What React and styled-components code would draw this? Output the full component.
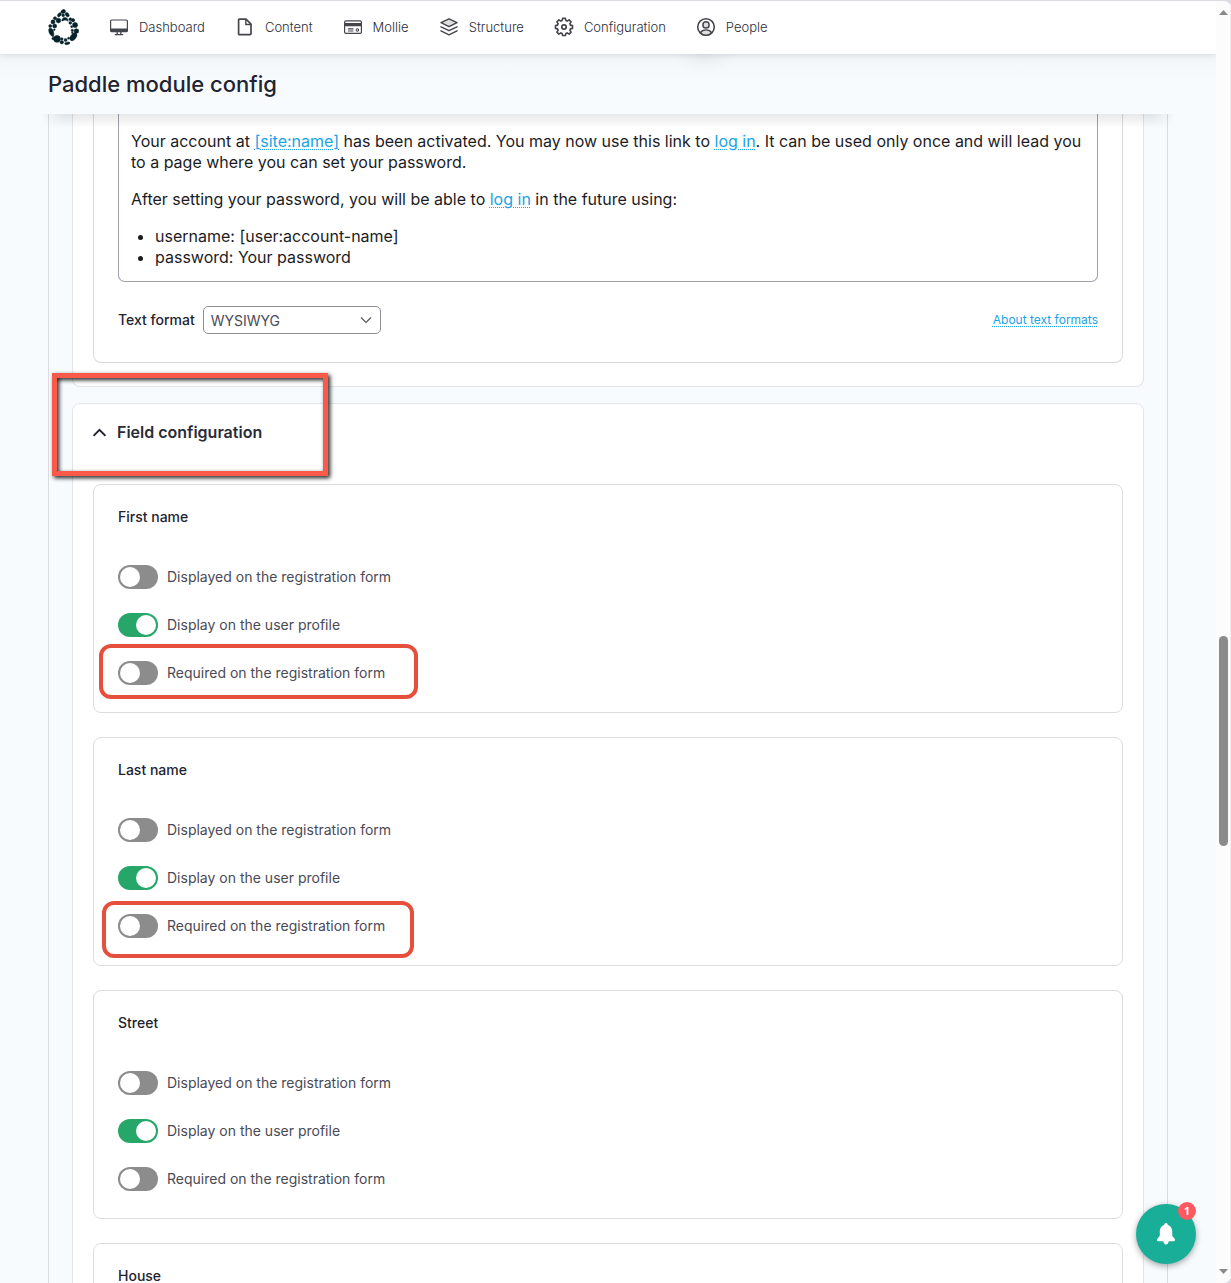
import React from 'react';
import styled, { createGlobalStyle } from 'styled-components';

const GlobalStyle = createGlobalStyle`
    *, *::before, *::after {
        box-sizing: border-box;
    }
    body {
        margin: 0;
        background-color: #dcdce2;
        font-family: Inter, sans-serif;
        color: #222330;
    }
    p, ul, h1, h2, h3 {
        margin: 0;
    }
`;

const Window = styled.div`
    height: 100vh;
    display: flex;
    overflow: hidden;
    border-top: 1px solid #dcdce2;
    border-radius: 0 8px 8px 0;
    background-color: #f7fbfe;
`;

const Main = styled.div`
    flex: 1;
    min-width: 0;
    display: flex;
    flex-direction: column;
    overflow: hidden;
`;

const Toolbar = styled.nav`
    position: relative;
    z-index: 2;
    flex: none;
    height: 53px;
    padding: 0 48px 2px;
    display: flex;
    align-items: center;
    gap: 30px;
    background-color: #fff;
    box-shadow: 0 0 8px rgba(0, 0, 0, .16);
`;

const NavLink = styled.a`
    display: flex;
    align-items: center;
    gap: 10px;
    font-size: 13px;
    line-height: 20px;
    font-weight: 300;
    color: #2c2c38;
    text-decoration: none;
`;

const NavIcon = styled.svg`
    width: 20px;
    height: 20px;
    fill: none;
    stroke: #45464c;
    stroke-width: 1.7;
    stroke-linecap: round;
    stroke-linejoin: round;
`;

const Logo = styled.svg`
    display: block;
    width: 31px;
    height: 36px;
    fill: #06232b;
    stroke: #06232b;
    stroke-width: 1.5;
`;

const TitleBar = styled.header`
    position: relative;
    z-index: 1;
    flex: none;
    height: 60px;
    padding: 0 48px;
    display: flex;
    align-items: center;
    background-color: #f7fbfe;
    background-image:
        radial-gradient(ellipse 32px 20px at 58% 0, rgba(30, 40, 60, .05), transparent),
        linear-gradient(rgba(30, 40, 60, .02), transparent 50%);

    &::after {
        content: '';
        position: absolute;
        top: 100%;
        left: 40px;
        right: 40px;
        height: 14px;
        background-image: linear-gradient(rgba(0, 0, 0, .09), transparent);
        mask-image: linear-gradient(90deg, transparent, #000 24px, #000 calc(100% - 24px), transparent);
        pointer-events: none;
    }
`;

const Title = styled.h1`
    font-size: 22px;
    line-height: 32px;
    font-weight: 500;
`;

const Content = styled.main`
    flex: 1;
    min-height: 0;
    overflow: hidden;
    padding: 0 48px;
`;

const Region = styled.div`
    padding: 0 23px 24px;
    display: flex;
    flex-direction: column;
    gap: 16px;
    border: 1px solid #d8dbdf;
    border-width: 0 1px;
`;

const Card = styled.section`
    position: relative;
    padding: 0 20px 23px;
    border: 1px solid #e2e4e8;
    border-radius: ${props => (props.$open ? '0 0 8px 8px' : '8px')};
    border-top-width: ${props => (props.$open ? '0' : '1px')};
    background-color: #fff;
`;

const TextGroup = styled.div`
    padding: 0 24px 28px;
    border: 1px solid #d9dadd;
    border-top: 0;
    border-radius: 0 0 8px 8px;
`;

const Editor = styled.div`
    padding: 17px 12px 13px;
    display: flex;
    flex-direction: column;
    gap: 16px;
    border: 1px solid #a0a0ab;
    border-top: 0;
    border-radius: 0 0 7px 7px;
    font-size: 16px;
    line-height: 21px;
    color: #1c1c1f;
`;

const TextLink = styled.a`
    color: #1ba3e6;
    text-decoration: underline dotted;
    text-decoration-thickness: 1px;
    text-underline-offset: 2px;
`;

const Tokens = styled.ul`
    padding-left: 24px;
`;

const FormatRow = styled.div`
    padding-top: 24px;
    display: flex;
    align-items: center;
    gap: 8px;
`;

const FormatLabel = styled.label`
    font-size: 14px;
    line-height: 20px;
    font-weight: 500;
`;

const SelectBox = styled.div`
    position: relative;
    width: 178px;
`;

const Select = styled.select`
    appearance: none;
    display: block;
    width: 100%;
    height: 28px;
    padding: 0 7px;
    border: 1px solid #8e8f9b;
    border-radius: 5px;
    background-color: #fff;
    font: 400 14px Inter, sans-serif;
    color: #4a4b57;
`;

const SelectArrow = styled.svg`
    position: absolute;
    top: 10px;
    right: 9px;
    width: 12px;
    height: 8px;
    fill: none;
    stroke: #55565b;
    stroke-width: 1.2;
    pointer-events: none;
`;

const HelpLink = styled(TextLink)`
    margin-left: auto;
    font-size: 12px;
    line-height: 20px;
`;

const Summary = styled.button`
    width: 100%;
    height: 56px;
    padding: 0;
    display: flex;
    align-items: center;
    gap: 11px;
    border: 0;
    background: none;
    font: 600 16px Inter, sans-serif;
    color: #2a2b38;
`;

const Chevron = styled.svg`
    width: 13px;
    height: 9px;
    fill: none;
    stroke: #222330;
    stroke-width: 1.8;
`;

const FieldList = styled.div`
    padding-top: 24px;
    display: flex;
    flex-direction: column;
    gap: 24px;
`;

const Fieldset = styled.section`
    padding: 20px 24px 27px;
    display: flex;
    flex-direction: column;
    gap: 24px;
    border: 1px solid #dcdde0;
    border-radius: 8px;
`;

const FieldTitle = styled.h3`
    margin-bottom: 12px;
    font-size: 14px;
    line-height: 24px;
    font-weight: 500;
`;

const ToggleRow = styled.div`
    position: relative;
    display: flex;
    align-items: center;
    gap: 9px;
`;

const Toggle = styled.input`
    appearance: none;
    width: 40px;
    height: 24px;
    margin: 0;
    padding: 2px;
    display: flex;
    border-radius: 12px;
    background-color: #8c8c8c;

    &::before {
        content: '';
        width: 20px;
        height: 20px;
        border-radius: 50%;
        background-color: #fff;
    }
    &:checked {
        justify-content: flex-end;
        background-color: #26a769;
    }
`;

const ToggleLabel = styled.label`
    font-size: 14px;
    line-height: 24px;
    color: #4a4a55;
`;

const HeadingMark = styled.span`
    position: absolute;
    top: -31px;
    left: -21px;
    width: 276px;
    height: 103px;
    border: 5px solid #fb5a4b;
    filter: drop-shadow(2px 2px 2px rgba(0, 0, 0, .9));
    pointer-events: none;
`;

const RowMark = styled.span`
    position: absolute;
    top: ${props => (props.$wide ? '-17px' : '-13px')};
    left: ${props => (props.$wide ? '-19px' : '-16px')};
    width: ${props => (props.$wide ? '319px' : '312px')};
    height: ${props => (props.$wide ? '55px' : '57px')};
    border: 4px solid #e64f3c;
    border-radius: 12px;
    pointer-events: none;
`;

const Scrollbar = styled.div`
    flex: none;
    width: 15px;
    padding: 8px 3px;
    display: flex;
    flex-direction: column;
    border-right: 1px solid #f0f0f2;
    background-color: #fcfcfc;
`;

const ScrollArrow = styled.svg`
    width: 9px;
    height: 6px;
    fill: #8b8b8b;
`;

const ScrollSpace = styled.div`
    flex: ${props => props.$size};
`;

const Thumb = styled.div`
    flex: 210;
    width: 9px;
    border-radius: 5px;
    background-color: #8b8b8b;
`;

const BellButton = styled.button`
    position: fixed;
    right: 35px;
    bottom: 19px;
    width: 60px;
    height: 60px;
    padding: 0;
    display: grid;
    place-items: center;
    border: 0;
    border-radius: 50%;
    background-color: #18ae97;
    box-shadow: 0 2px 6px rgba(0, 0, 0, .35);
`;

const BellIcon = styled.svg`
    width: 20px;
    height: 22px;
    fill: #fff;
`;

const Badge = styled.span`
    position: absolute;
    top: -2px;
    right: 0;
    width: 18px;
    height: 18px;
    border-radius: 50%;
    background-color: #ff5860;
    font: 700 11px/18px 'Open Sans', sans-serif;
    color: #fff;
`;

const icons = {
    Dashboard: (
        <>
            <rect x="1.6" y="3" width="16.8" height="11.6" rx="1" strokeWidth="1.2" />
            <path d="M2 12.4h16M2 13.6h16" strokeWidth="2" />
            <path d="M8.2 15v2M11.8 15v2M6.3 17.6h7.4" strokeWidth="1.3" />
        </>
    ),
    Content: (
        <>
            <path d="M4.5 2.2h6.5l5 5v9.6a.9.9 0 0 1-.9.9H4.500a.9.9 0 0 1-.9-.9V3.100a.9.9 0 0 1 .9-.9z" />
            <path d="M10.800 2.500v5h5" strokeWidth="1.4" />
        </>
    ),
    Mollie: (
        <>
            <rect x="1.6" y="3.9" width="16.8" height="12.4" rx="1.4" strokeWidth="1.2" />
            <path d="M2 7.7h16" strokeWidth="3.2" strokeLinecap="butt" />
            <path d="M5.4 11.9h4.6M5.4 14h4.6" strokeWidth="1.1" />
            <circle cx="14.4" cy="13" r="1.2" strokeWidth="1.1" />
        </>
    ),
    Structure: (
        <>
            <path d="M10 1.8l8 3.9-8 3.9-8-3.9z" fill="#dedede" strokeWidth="1.5" />
            <path d="M2 9.8l8 3.9 8-3.9M2 13.9l8 3.9 8-3.9" strokeWidth="1.5" />
        </>
    ),
    Configuration: (
        <>
            <path d="M8.6 1.9h2.8l.5 2.1 1.3.6 1.9-1.2 2 2-1.2 1.9.5 1.3 2.1.5v2.8l-2.1.5-.5 1.3 1.2 1.9-2 2-1.9-1.2-1.3.6-.5 2H8.6l-.5-2-1.3-.6-1.9 1.2-2-2 1.2-1.9-.6-1.3-2-.5V9.1l2-.5.6-1.3-1.2-1.9 2-2 1.9 1.2L8.1 4z" transform="translate(0 -.5)" strokeWidth="1.6" />
            <circle cx="10" cy="10" r="2.2" strokeWidth="1.7" />
        </>
    ),
    People: (
        <>
            <circle cx="10" cy="10" r="8.3" strokeWidth="1.6" />
            <circle cx="10" cy="7.9" r="3.1" fill="#dedede" strokeWidth="1.5" />
            <path d="M4.4 15.8c1-1.9 3-2.9 5.6-2.9s4.6 1 5.6 2.9c-1.4 1.5-3.4 2.4-5.6 2.4s-4.2-.9-5.6-2.4z" fill="#dedede" strokeWidth="1.4" />
        </>
    ),
};

const fields = [
    { name: 'First name', mark: 'wide' },
    { name: 'Last name', mark: 'narrow' },
    { name: 'Street' },
    { name: 'House' },
];

const Field = ({ name, mark }) => {
    const id = name.toLowerCase().replace(' ', '-');
    return (
        <Fieldset>
            <FieldTitle>{name}</FieldTitle>
            <ToggleRow>
                <Toggle type="checkbox" id={`${id}-display`} />
                <ToggleLabel htmlFor={`${id}-display`}>Displayed on the registration form</ToggleLabel>
            </ToggleRow>
            <ToggleRow>
                <Toggle type="checkbox" id={`${id}-profile`} defaultChecked />
                <ToggleLabel htmlFor={`${id}-profile`}>Display on the user profile</ToggleLabel>
            </ToggleRow>
            <ToggleRow>
                <Toggle type="checkbox" id={`${id}-required`} />
                <ToggleLabel htmlFor={`${id}-required`}>Required on the registration form</ToggleLabel>
                {mark && <RowMark $wide={mark === 'wide'} />}
            </ToggleRow>
        </Fieldset>
    );
};

const App = () => (
    <>
        <GlobalStyle />
        <Window>
            <Main>
                <Toolbar>
                    <Logo viewBox="0 0 90 106" aria-hidden="true">
                        <path d="M37 9c2-5 6-8 9-8 4 2 6 5 5 8s-6 5-9 4-5-2-5-4z" />
                        <ellipse cx="33" cy="17" rx="7" ry="4.5" transform="rotate(-48 33 17)" />
                        <ellipse cx="56" cy="17" rx="7" ry="5" transform="rotate(50 56 17)" />
                        <circle cx="44" cy="19" r="4" />
                        <circle cx="30" cy="34" r="7" />
                        <path d="M40 35c0-6 4-10 9-10s10 4 10 11c-4-2-8-4-12-3-3 0-7 4-7 2z" />
                        <circle cx="20" cy="27" r="4.5" />
                        <circle cx="65" cy="30" r="4" />
                        <circle cx="73" cy="33" r="5" />
                        <circle cx="65" cy="41" r="4" />
                        <circle cx="14" cy="38" r="6" />
                        <circle cx="19" cy="50" r="6" />
                        <circle cx="6" cy="50" r="4.5" />
                        <circle cx="79" cy="47" r="7.5" />
                        <circle cx="69" cy="52" r="3" />
                        <path d="M2 58c5-3 12 0 13 7 1 6 3 10 0 17C5 78 0 68 2 58z" />
                        <circle cx="18" cy="61" r="2.5" />
                        <circle cx="83" cy="65" r="7" />
                        <circle cx="71" cy="63" r="3.5" />
                        <ellipse cx="74" cy="82" rx="13" ry="8" transform="rotate(-52 74 82)" />
                        <circle cx="71" cy="70" r="2.5" />
                        <circle cx="26" cy="88" r="10" />
                        <circle cx="15" cy="87" r="4" />
                        <circle cx="40" cy="88" r="3.5" />
                        <circle cx="40" cy="98" r="5" />
                        <circle cx="60" cy="86" r="3" />
                        <circle cx="51" cy="91" r="4.5" />
                        <ellipse cx="56" cy="101" rx="8" ry="3.5" transform="rotate(-12 56 101)" />
                    </Logo>
                    {Object.keys(icons).map(name => (
                        <NavLink href="#" key={name}>
                            <NavIcon viewBox="0 0 20 20">{icons[name]}</NavIcon>
                            {name}
                        </NavLink>
                    ))}
                </Toolbar>
                <TitleBar>
                    <Title>Paddle module config</Title>
                </TitleBar>
                <Content>
                    <Region>
                        <Card $open>
                            <TextGroup>
                                <Editor>
                                    <p>
                                        Your account at <TextLink href="#">[site:name]</TextLink> has been activated. You may now use this link to <TextLink href="#">log in</TextLink>. It can be used only once and will lead you to a page where you can set your password.
                                    </p>
                                    <p>After setting your password, you will be able to <TextLink href="#">log in</TextLink> in the future using:</p>
                                    <Tokens>
                                        <li>username: [user:account-name]</li>
                                        <li>password: Your password</li>
                                    </Tokens>
                                </Editor>
                                <FormatRow>
                                    <FormatLabel htmlFor="format">Text format</FormatLabel>
                                    <SelectBox>
                                        <Select id="format">
                                            <option>WYSIWYG</option>
                                        </Select>
                                        <SelectArrow viewBox="0 0 12 8"><path d="M1 1.5l5 5 5-5" /></SelectArrow>
                                    </SelectBox>
                                    <HelpLink href="#">About text formats</HelpLink>
                                </FormatRow>
                            </TextGroup>
                        </Card>
                        <Card>
                            <Summary type="button" aria-expanded="true">
                                <Chevron viewBox="0 0 12 8"><path d="M.5 7L6 1.5 11.5 7" /></Chevron>
                                Field configuration
                            </Summary>
                            <HeadingMark />
                            <FieldList>
                                {fields.map(field => <Field key={field.name} {...field} />)}
                            </FieldList>
                        </Card>
                    </Region>
                </Content>
            </Main>
            <Scrollbar aria-hidden="true">
                <ScrollArrow viewBox="0 0 9 6"><path d="M0 6l4.5-5L9 6z" /></ScrollArrow>
                <ScrollSpace $size={620} />
                <Thumb />
                <ScrollSpace $size={423} />
                <ScrollArrow viewBox="0 0 9 6"><path d="M0 0l4.5 5L9 0z" /></ScrollArrow>
            </Scrollbar>
            <BellButton type="button" aria-label="Notifications">
                <BellIcon viewBox="0 0 20 22">
                    <path d="M10 0a1.7 1.7 0 0 1 1.7 1.9c2.8.7 4.5 3.1 4.5 6v4.8l2.4 3.1c.8 1.1.3 2.5-1 2.500H2.400c-1.3 0-1.800-1.400-1-2.500l2.400-3.100V7.900c0-2.900 1.700-5.300 4.500-6A1.700 1.700 0 0 1 10 0zM7.200 18h5.600c-.3 2.300-1.400 3.400-2.800 3.400S7.500 20.300 7.200 18z" />
                </BellIcon>
                <Badge>1</Badge>
            </BellButton>
        </Window>
    </>
);

export default App;
